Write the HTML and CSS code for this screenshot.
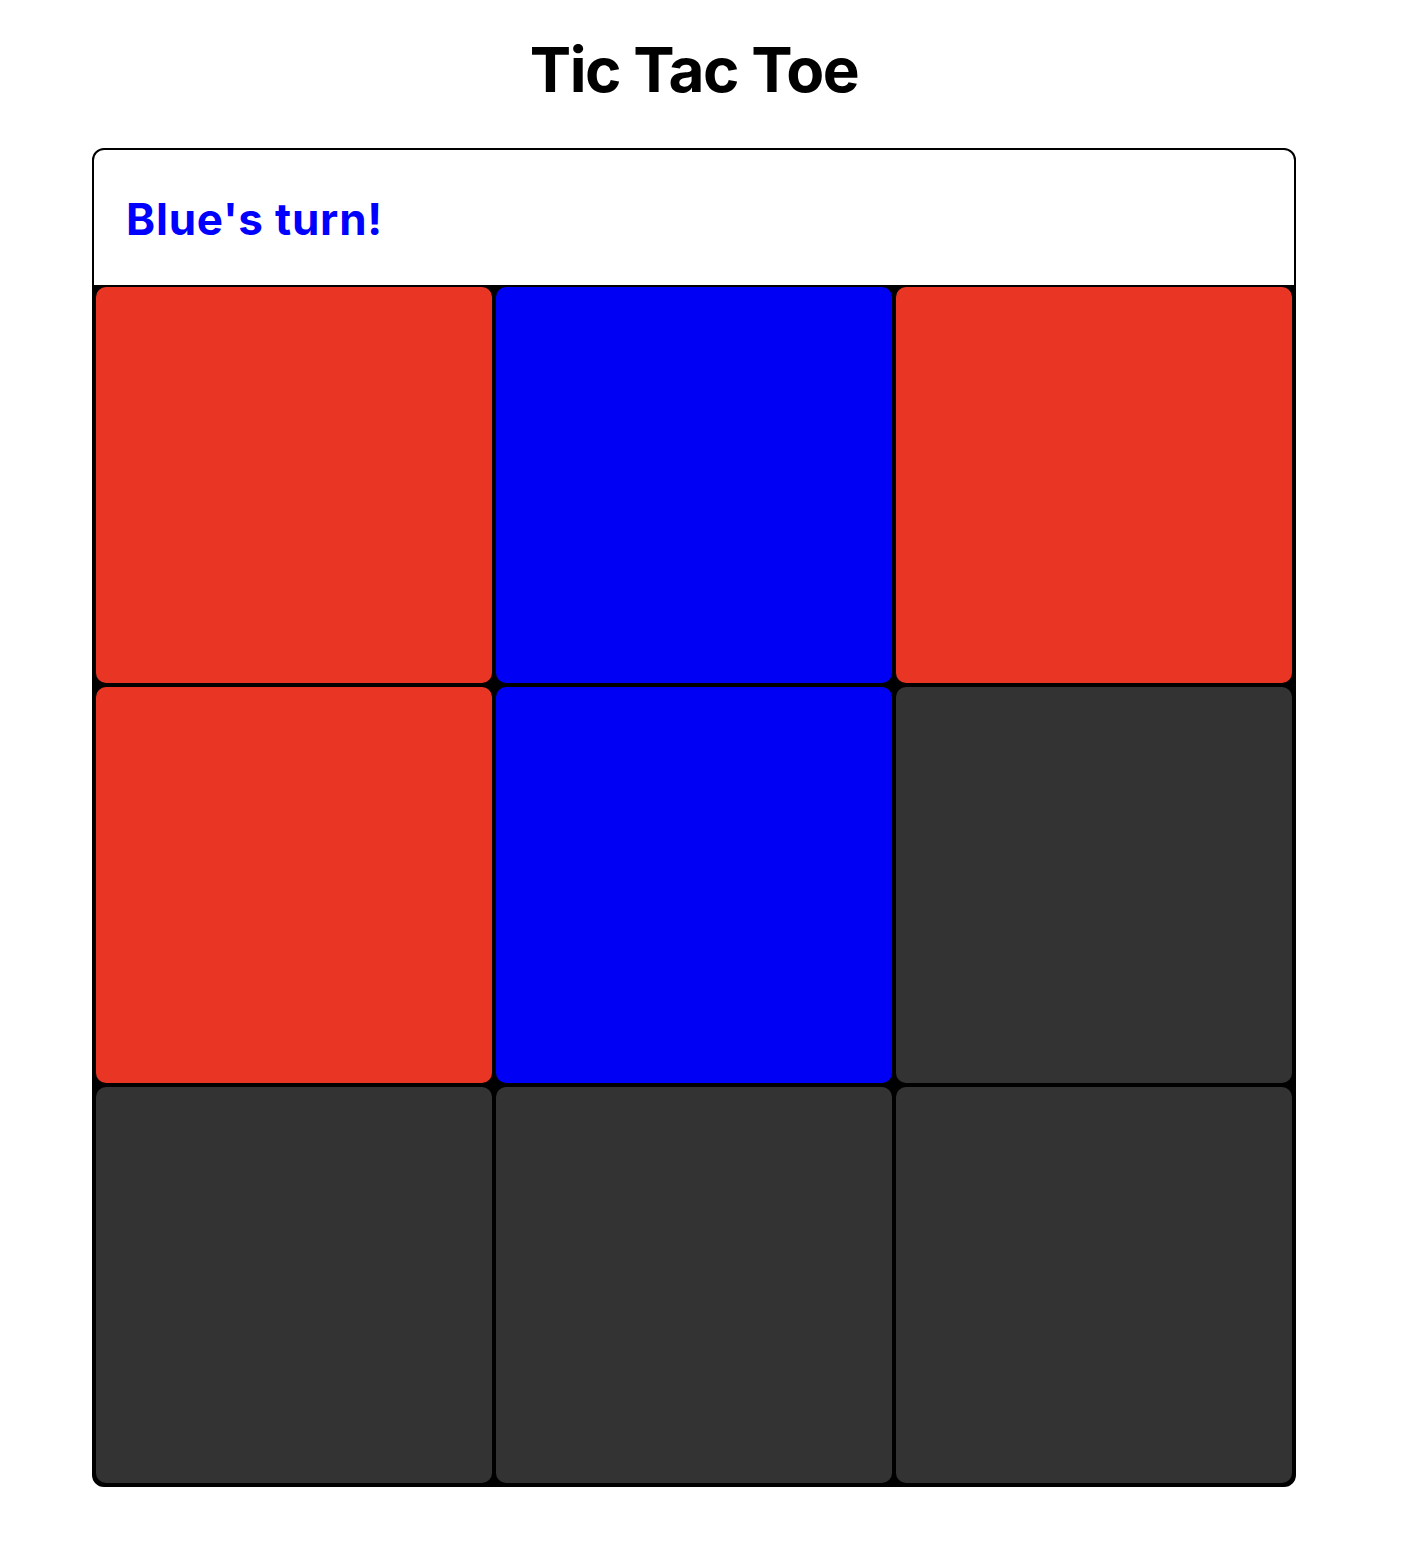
FILE: index.html
```html
<!DOCTYPE html>
<html lang="en">
<head>
  <meta charset="UTF-8" />
  <meta name="viewport" content="width=device-width, initial-scale=1.0"/>
  <title>Tic Tac Toe</title>
  <link rel="stylesheet" href="styles.css">
</head>
<body>

<div class="page">
  <h1 class="title">Tic Tac Toe</h1>

  <div class="game">
    <div class="status">
      <h2 class="turn">Blue's turn!</h2>
    </div>
    <div class="board">
      <div class="cell red"></div>
      <div class="cell blue"></div>
      <div class="cell red"></div>
      <div class="cell red"></div>
      <div class="cell blue"></div>
      <div class="cell"></div>
      <div class="cell"></div>
      <div class="cell"></div>
      <div class="cell"></div>
    </div>
  </div>
</div>

</body>
</html>
```

FILE: styles.css
```css
body {
  margin: 0;
  font-family: Inter, "Noto Sans", sans-serif;
  background-color: #fff;
}
.page {
  width: 1388px;
  padding-top: 30px;
}
.title {
  margin: 0 0 38px;
  text-align: center;
  font-size: 62px;
  font-weight: 700;
  line-height: 80px;
  letter-spacing: -1.5px;
  color: #000;
}
.game {
  width: 1200px;
  margin: 0 auto;
  border: 2px solid #000;
  border-radius: 12px;
  overflow: hidden;
  background-color: #000;
}
.status {
  background-color: #fff;
  height: 135px;
  padding: 0 32px;
  display: flex;
  align-items: center;
}
.turn {
  margin: 3px 0 0;
  font-size: 44px;
  font-weight: 700;
  letter-spacing: 0.8px;
  color: #0000ff;
}
.board {
  display: grid;
  grid-template-columns: repeat(3, 396px);
  grid-auto-rows: 396px;
  gap: 4px;
  padding: 2px;
}
.cell {
  background-color: #333;
  border-radius: 10px;
}
.cell.red {
  background-color: #e93524;
}
.cell.blue {
  background-color: #0000f5;
}
```
